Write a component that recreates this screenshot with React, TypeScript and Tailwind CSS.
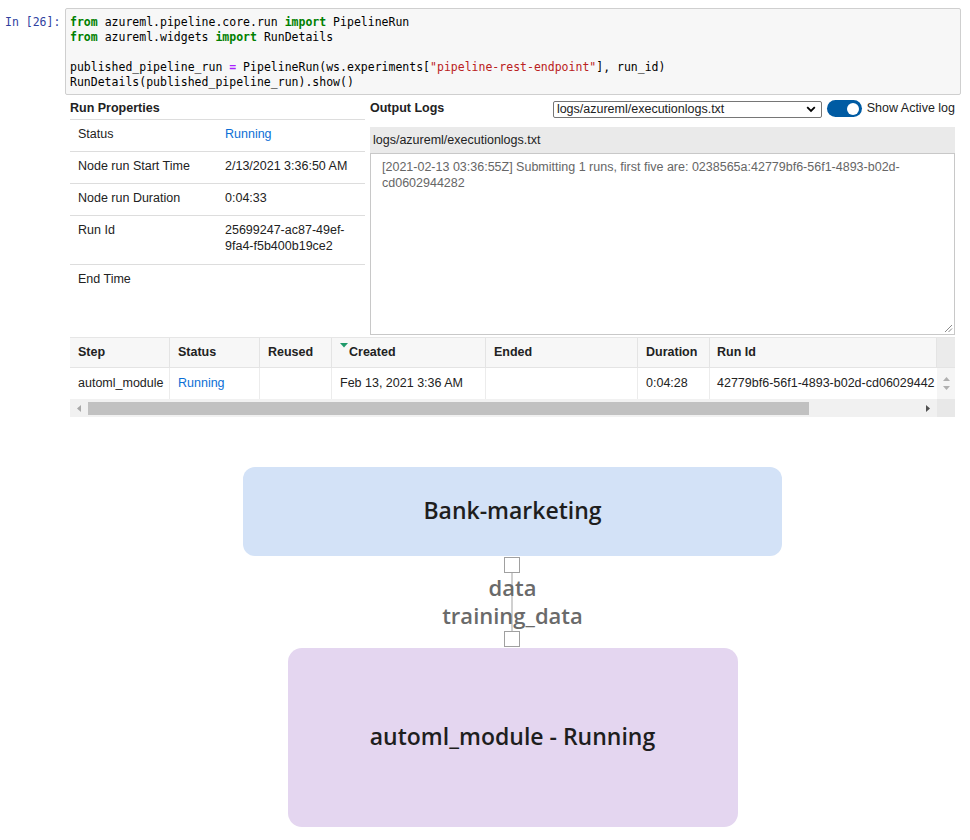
import React from "react";

const Kw = ({ children }: { children: React.ReactNode }) => (
  <span className="text-[#008000] font-bold">{children}</span>
);

function CodeCell() {
  return (
    <div className="flex pt-[8px]">
      <div className="w-[65px] shrink-0 pl-[5px] pt-[7px] text-[#303f9f] leading-[15px]">In&nbsp;[26]:</div>
      <div className="w-[896px] border border-[#cfcfcf] bg-[#f7f7f7] rounded-[2px] pl-[4px] pt-[6px] pb-[4px] text-black leading-[15px] whitespace-pre">
        <div>
          <Kw>from</Kw> azureml.pipeline.core.run <Kw>import</Kw> PipelineRun
        </div>
        <div>
          <Kw>from</Kw> azureml.widgets <Kw>import</Kw> RunDetails
        </div>
        <div>&nbsp;</div>
        <div>
          published_pipeline_run <span className="text-[#aa22ff] font-bold">=</span> PipelineRun(ws.experiments[
          <span className="text-[#ba2121]">"pipeline-rest-endpoint"</span>], run_id)
        </div>
        <div>RunDetails(published_pipeline_run).show()</div>
      </div>
    </div>
  );
}

function PropRow({ label, value, h, last }: { label: string; value: React.ReactNode; h: string; last?: boolean }) {
  return (
    <div className={`flex pt-[6px] leading-[16px] ${h} ${last ? "" : "border-b border-[#dddddd]"}`}>
      <div className="w-[155px] pl-[8px] shrink-0">{label}</div>
      <div>{value}</div>
    </div>
  );
}

function RunProperties() {
  return (
    <div className="w-[295px] shrink-0">
      <div className="h-[21px] flex items-center font-bold">Run Properties</div>
      <div className="border-t border-[#dddddd]">
        <PropRow label="Status" value={<span className="text-[#0b6fd6]">Running</span>} h="h-[32px]" />
        <PropRow label="Node run Start Time" value="2/13/2021 3:36:50 AM" h="h-[32px]" />
        <PropRow label="Node run Duration" value="0:04:33" h="h-[32px]" />
        <PropRow
          label="Run Id"
          value={
            <>
              25699247-ac87-49ef-
              <br />
              9fa4-f5b400b19ce2
            </>
          }
          h="h-[49px]"
        />
        <PropRow label="End Time" value="" h="h-[32px]" last />
      </div>
    </div>
  );
}

function OutputLogs() {
  return (
    <div className="w-[585px] shrink-0">
      <div className="h-[21px] flex items-center whitespace-nowrap">
        <div className="w-[183px] font-bold">Output Logs</div>
        <div className="w-[269px] h-[17px] border border-[#767676] rounded-[2px] bg-white flex items-center justify-between pl-[3px] pr-[5px] mt-[1px]">
          <span className="leading-[15px]">logs/azureml/executionlogs.txt</span>
          <svg width="10" height="7" viewBox="0 0 10 7">
            <path d="M1.2 1.2 L5 5 L8.8 1.2" stroke="#000" strokeWidth="1.8" fill="none" />
          </svg>
        </div>
        <div className="ml-[5px] w-[35px] h-[17px] shrink-0 rounded-full bg-[#005ba3] flex items-center justify-end pr-[3px]">
          <div className="w-[12px] h-[12px] rounded-full bg-white" />
        </div>
        <div className="ml-[5px]">Show Active log</div>
      </div>
      <div className="mt-[8px] h-[26px] bg-[#eaeaea] flex items-center pl-[3px]">logs/azureml/executionlogs.txt</div>
      <div className="relative h-[182px] border border-[#c8c8c8] bg-white pl-[11px] pt-[5px] leading-[16px] text-[#666666]">
        [2021-02-13 03:36:55Z] Submitting 1 runs, first five are: 0238565a:42779bf6-56f1-4893-b02d-
        <br />
        cd0602944282
        <svg className="absolute right-[1px] bottom-[1px]" width="9" height="9" viewBox="0 0 9 9">
          <path d="M8 1 L1 8 M8 4.5 L4.5 8" stroke="#8a8a8a" strokeWidth="1" />
        </svg>
      </div>
    </div>
  );
}

function Grid() {
  const cols = [
    { name: "Step", w: "w-[100px]" },
    { name: "Status", w: "w-[90px]" },
    { name: "Reused", w: "w-[72px]" },
    { name: "Created", w: "w-[154px]" },
    { name: "Ended", w: "w-[152px]" },
    { name: "Duration", w: "w-[72px]" },
    { name: "Run Id", w: "w-[227px]" },
  ];
  const vals: React.ReactNode[] = [
    "automl_module",
    <span className="text-[#0b6fd6]">Running</span>,
    "",
    "Feb 13, 2021 3:36 AM",
    "",
    "0:04:28",
    "42779bf6-56f1-4893-b02d-cd06029442",
  ];
  return (
    <div className="mt-[2px] w-[885px] border-t border-[#e6e6e6]">
      <div className="flex h-[30px] bg-[#f7f7f7] border-b border-[#e4e4e4]">
        {cols.map((c, i) => (
          <div
            key={c.name}
            className={`${c.w} shrink-0 h-full border-r border-[#e4e4e4] font-bold flex items-center ${i === 6 ? "pl-[7px]" : "pl-[8px]"}`}
          >
            {c.name === "Created" ? (
              <>
                <svg className="self-start mt-[5px]" width="8" height="5" viewBox="0 0 8 5">
                  <path d="M0 0 L8 0 L4 4.5 Z" fill="#1f9a6a" />
                </svg>
                <span className="ml-[1px]">Created</span>
              </>
            ) : (
              c.name
            )}
          </div>
        ))}
        <div className="w-[18px] shrink-0 h-full bg-[#ebebeb]" />
      </div>
      <div className="flex h-[31px] bg-white">
        {cols.map((c, i) => (
          <div
            key={c.name}
            className={`${c.w} shrink-0 h-full ${i < 6 ? "border-r border-[#ececec]" : ""} flex items-center overflow-hidden whitespace-nowrap ${i === 6 ? "pl-[7px]" : "pl-[8px]"}`}
          >
            {vals[i]}
          </div>
        ))}
        <div className="w-[18px] shrink-0 h-full bg-[#f5f5f5] flex flex-col items-center justify-center gap-[5px]">
          <svg width="7" height="4" viewBox="0 0 7 4">
            <path d="M0 4 L3.5 0 L7 4 Z" fill="#b0b0b0" />
          </svg>
          <svg width="7" height="4" viewBox="0 0 7 4">
            <path d="M0 0 L3.5 4 L7 0 Z" fill="#b0b0b0" />
          </svg>
        </div>
      </div>
      <div className="flex h-[18px]">
        <div className="w-[867px] h-full bg-[#f1f1f1] flex items-center">
          <div className="w-[18px] flex justify-center">
            <svg width="4" height="7" viewBox="0 0 4 7">
              <path d="M4 0 L0 3.5 L4 7 Z" fill="#a8a8a8" />
            </svg>
          </div>
          <div className="w-[721px] h-[13px] bg-[#c1c1c1]" />
          <div className="flex-1" />
          <div className="w-[18px] flex justify-center">
            <svg width="4" height="7" viewBox="0 0 4 7">
              <path d="M0 0 L4 3.5 L0 7 Z" fill="#505050" />
            </svg>
          </div>
        </div>
        <div className="w-[18px] h-full bg-[#e8e8e8]" />
      </div>
    </div>
  );
}

function Port() {
  return <div className="relative z-10 w-[16px] h-[16px] border-[1.5px] border-[#a0a0a0] bg-white" />;
}

function Diagram() {
  return (
    <div
      className="ml-[70px] w-[885px] mt-[50px] flex flex-col items-center text-[#1e1e1e]"
      style={{ fontFamily: '"Open Sans", "Noto Sans", sans-serif' }}
    >
      <div className="w-[539px] h-[89px] rounded-[12px] bg-[#d3e2f7] flex items-center justify-center text-[23px] font-semibold pb-[3px]">
        Bank-marketing
      </div>
      <div className="relative mt-[1px] flex flex-col items-center">
        <div className="absolute left-1/2 -translate-x-1/2 top-[8px] bottom-[8px] w-[2px] bg-[#d0d0d0]" />
        <Port />
        <div className="relative flex flex-col items-center text-[22px] text-[#6a6a6a] font-semibold leading-[28px] h-[58px]">
          <span>data</span>
          <span>training_data</span>
        </div>
        <Port />
      </div>
      <div className="mt-[1px] w-[450px] h-[179px] rounded-[14px] bg-[#e4d6f0] flex items-center justify-center text-[23px] font-semibold pb-[3px]">
        automl_module - Running
      </div>
    </div>
  );
}

export default function App() {
  return (
    <div className="w-[970px] h-[840px] overflow-hidden bg-white relative">
      <div style={{ fontFamily: '"DejaVu Sans Mono", monospace', fontSize: "11.5px" }}>
        <CodeCell />
      </div>
      <div
        className="ml-[70px] w-[885px] mt-[3px] text-[#222222] text-[12.5px]"
        style={{ fontFamily: '"Liberation Sans", Arial, sans-serif' }}
      >
        <div className="flex gap-[5px]">
          <RunProperties />
          <OutputLogs />
        </div>
        <Grid />
      </div>
      <Diagram />
    </div>
  );
}
